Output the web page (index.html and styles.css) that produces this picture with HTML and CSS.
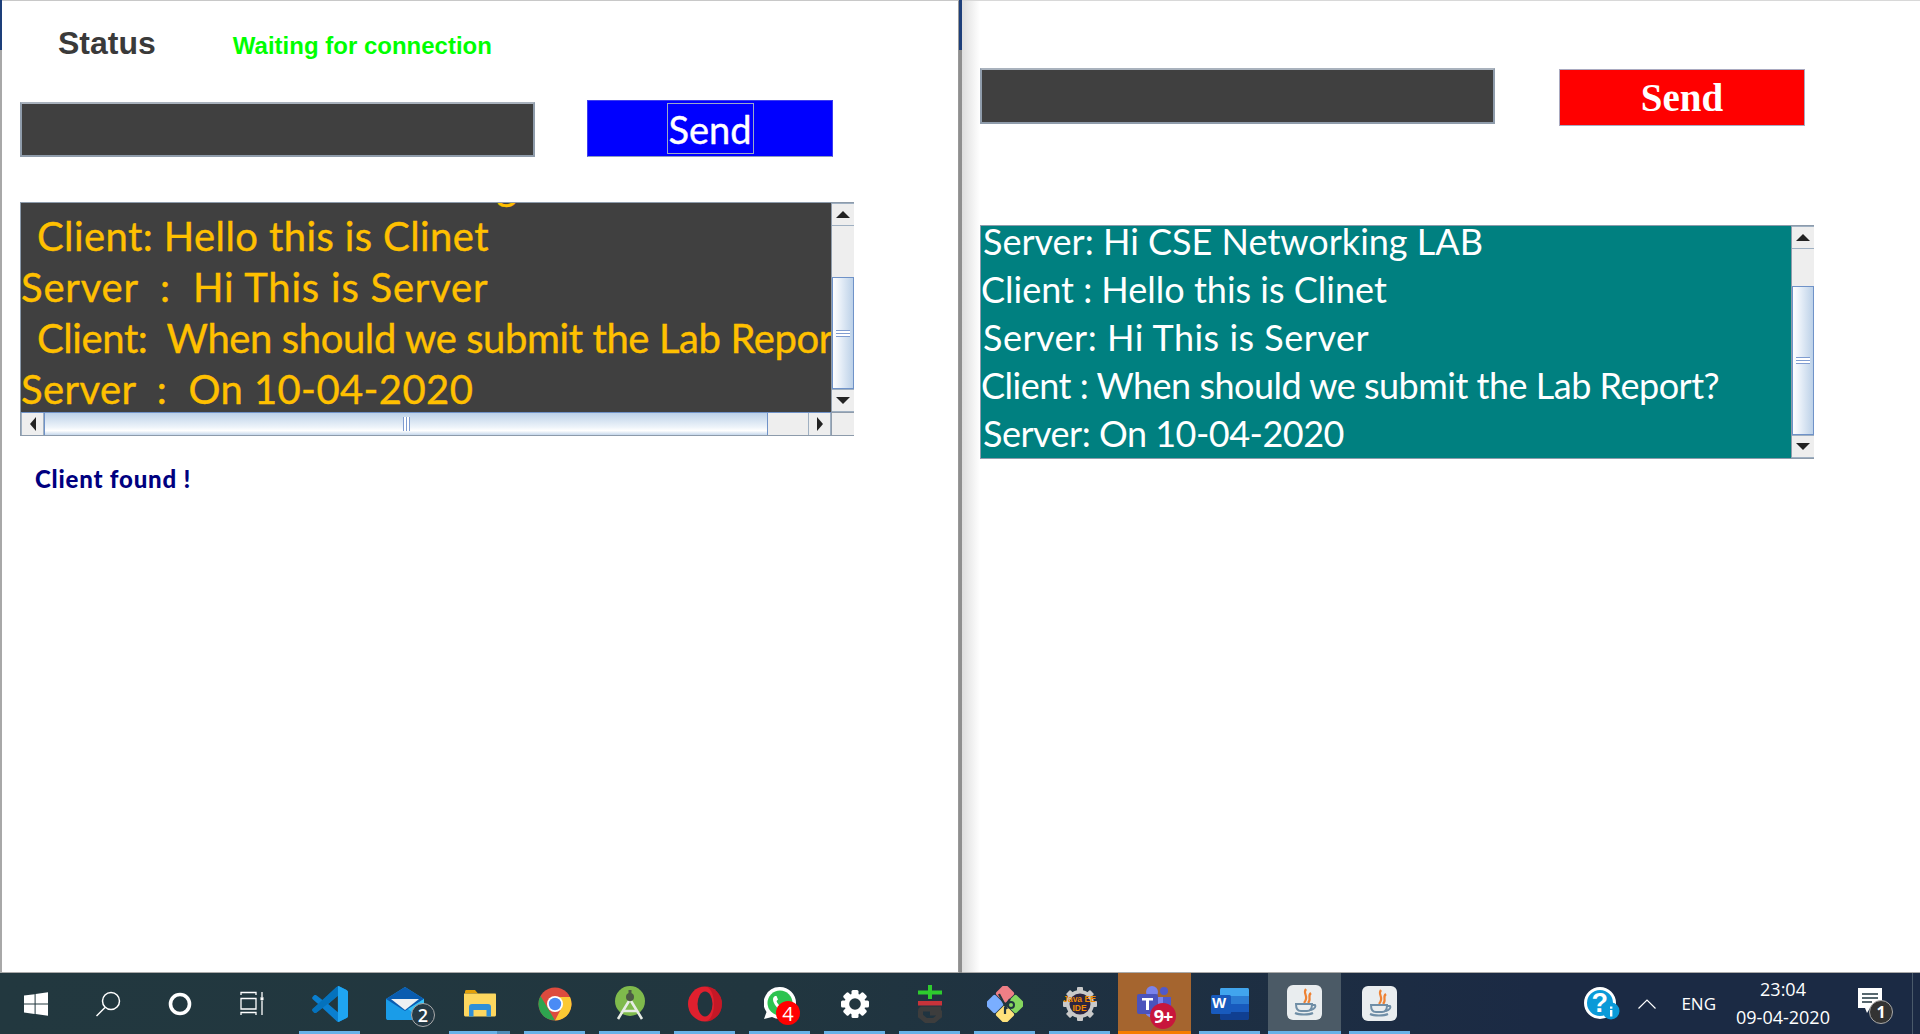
FILE: index.html
```html
<!DOCTYPE html>
<html lang="en">
<head>
  <meta charset="UTF-8">
  <title>Chat Lab</title>
  <link rel="stylesheet" href="styles.css">
</head>
<body>
  <div class="desktop">
    <div class="edge"></div>

    <!-- server window -->
    <div class="window window-left">
      <div class="status-row">
        <span class="status-title">Status</span>
        <span class="status-text">Waiting for connection</span>
      </div>
      <div class="form-row">
        <div class="field"></div>
        <button class="send send-blue"><span class="send-focus">Send</span></button>
      </div>
      <div class="panel panel-dark">
        <div class="log log-yellow">
          <div class="log-line">Server : Hi CSE Networking LAB</div>
          <div class="log-line indent snug">Client: Hello this is Clinet</div>
          <div class="log-line wide">Server  :  Hi This is Server</div>
          <div class="log-line indent tight">Client:  When should we submit the Lab Report?</div>
          <div class="log-line snug">Server  :  On 10-04-2020</div>
        </div>
        <div class="vbar vbar-left">
          <div class="sb-btn"><i class="arrow arrow-up"></i></div>
          <div class="sb-track"></div>
          <div class="sb-thumb"><i class="grip"></i></div>
          <div class="sb-btn"><i class="arrow arrow-down"></i></div>
        </div>
        <div class="hbar">
          <div class="sb-btn"><i class="arrow arrow-left"></i></div>
          <div class="sb-thumb-h"><i class="grip-h"></i></div>
          <div class="sb-track"></div>
          <div class="sb-btn"><i class="arrow arrow-right"></i></div>
        </div>
        <div class="corner"></div>
      </div>
      <div class="found">Client found !</div>
    </div>

    <div class="divider"></div>

    <!-- client window -->
    <div class="window window-right">
      <div class="form-row form-row-right">
        <div class="field"></div>
        <button class="send send-red">Send</button>
      </div>
      <div class="panel panel-teal">
        <div class="log log-white">
          <div class="log-line indent">Server: Hi CSE Networking LAB</div>
          <div class="log-line">Client : Hello this is Clinet</div>
          <div class="log-line indent wide">Server: Hi This is Server</div>
          <div class="log-line tight">Client : When should we submit the Lab Report?</div>
          <div class="log-line indent tight">Server: On 10-04-2020</div>
        </div>
        <div class="vbar vbar-right">
          <div class="sb-btn"><i class="arrow arrow-up"></i></div>
          <div class="sb-track"></div>
          <div class="sb-thumb"><i class="grip"></i></div>
          <div class="sb-btn"><i class="arrow arrow-down"></i></div>
        </div>
      </div>
    </div>
  </div>

  <div class="taskbar">
    <div class="tb-sys">
      <svg width="24" height="24" viewBox="0 0 24 24"><path fill="#fff" d="M0 3.600 10.600 2.200V11.400H0ZM11.600 2 24 .2V11.400H11.600ZM0 12.500H10.600V21.900L0 20.400ZM11.600 12.500H24V23.800L11.600 22Z"/></svg>
    </div>
    <div class="tb-sys">
      <svg width="26" height="26" viewBox="0 0 26 26" fill="none" stroke="#fff" stroke-width="1.500"><circle cx="16" cy="10" r="8.500"/><path d="M10 16.500 1.500 25"/></svg>
    </div>
    <div class="tb-sys">
      <svg width="26" height="26" viewBox="0 0 26 26" fill="none"><circle cx="13" cy="13" r="9.500" stroke="#fff" stroke-width="3.600"/></svg>
    </div>
    <div class="tb-sys">
      <svg width="26" height="26" viewBox="0 0 26 26" fill="none" stroke="#fff" stroke-width="1.300"><path d="M2 4V1.500H17V4M2 24V21.500H17V24M2 7.500H17V18H2ZM23 1V6M23 9.500V24"/><rect x="21.500" y="6.200" width="3" height="3" fill="#fff" stroke="none"/></svg>
    </div>

    <div class="tb-app tb-first open">
      <svg width="36" height="36" viewBox="0 0 100 100">
        <path fill="#0a7fd0" fill-rule="evenodd" d="M96 11 75 1C72 0 70 1 68 3L29 39 12 26C10 25 8 25 6 26L2 30C0 32 0 35 2 37L17 50 2 63C0 65 0 68 2 70L6 74C8 75 10 75 12 74L29 61 68 97C70 99 72 100 75 99L96 89C98 88 100 85 100 83V17C100 15 98 12 96 11ZM72 27 45 50 72 73Z"/>
        <path fill="#1fa5f2" d="M72 0 75 1 96 11C98 12 100 15 100 17V83C100 85 98 88 96 89L75 99 72 100Z"/>
        <path fill="#0067ad" d="M68 3 72 2V27L29 61 12 74C10 75 8 75 6 74L2 70C0 68 0 65 2 63Z" opacity=".55"/>
      </svg>
    </div>
    <div class="tb-app">
      <svg width="38" height="34" viewBox="0 0 38 34">
        <path fill="#1a9ce8" d="M0 12 19 0 38 12V31C38 32.500 37 33 36 33H2C1 33 0 32.500 0 31Z"/>
        <path fill="#0a5cb0" d="M0 12 19 0 38 12 19 24Z"/>
        <path fill="#eef0f2" d="M5 12H33L19 23Z"/>
        <path fill="#39c2f5" d="M38 12V31C38 32 37 33 36 33L22 22Z"/>
      </svg>
      <span class="tb-badge badge-count">2</span>
    </div>
    <div class="tb-app open open-split">
      <svg width="32" height="27" viewBox="0 0 32 27">
        <path fill="#e3a008" d="M1 1.500C1 .6 1.600 0 2.500 0H11L14 3.500H1Z"/>
        <path fill="#fdd75f" d="M0 3.500H31C31.600 3.500 32 4 32 4.500V25C32 26 31 26.500 30 26.500H2C1 26.500 0 26 0 25Z"/>
        <path fill="#2f8fd8" d="M5 26.500V17C5 15 6 14 8 14H24C26 14 27 15 27 17V26.500H22.500V20H9.500V26.500Z"/>
      </svg>
    </div>
    <div class="tb-app open">
      <svg width="34" height="34" viewBox="0 0 34 34">
        <circle cx="17" cy="17" r="16.500" fill="#dd4b3e"/>
        <path fill="#2ea44f" d="M2.500 9 10 21.500 17 33.500A16.500 16.500 0 0 1 2.500 9Z"/>
        <path fill="#fcc934" d="M17 10H32A16.500 16.500 0 0 1 17 33.500L23.500 21Z"/>
        <circle cx="17" cy="17" r="8" fill="#fff"/>
        <circle cx="17" cy="17" r="6.200" fill="#4a8bf5"/>
      </svg>
    </div>
    <div class="tb-app open">
      <svg width="32" height="36" viewBox="0 0 32 36">
        <circle cx="16" cy="15" r="15" fill="#7fba4c"/>
        <path fill="none" stroke="#e8ece6" stroke-width="2.600" d="M15 15 4 33M17 15 28 33M9 25H23"/>
        <circle cx="16" cy="11" r="4" fill="#4c5a45"/>
        <rect x="14.500" y="4" width="3" height="4" fill="#4c5a45"/>
      </svg>
    </div>
    <div class="tb-app open">
      <svg width="34" height="36" viewBox="0 0 34 36">
        <ellipse cx="17" cy="18" rx="17" ry="17.500" fill="#e0202e"/>
        <path fill="#a80f1e" d="M17 .5C26 .5 34 8 34 18S26 35.500 17 35.500C22 35.500 26 28 26 18S22 .5 17 .5Z" opacity=".5"/>
        <ellipse cx="17" cy="18" rx="7.500" ry="12.500" fill="#21363f"/>
      </svg>
    </div>
    <div class="tb-app open">
      <svg width="32" height="33" viewBox="0 0 32 33">
        <path fill="#fff" d="M16 0A16 16 0 0 1 16 32C13 32 10.500 31 8 30L0 32 2.500 25A16 16 0 0 1 16 0Z"/>
        <circle cx="16" cy="16" r="12.500" fill="#2cc350"/>
        <path fill="#fff" d="M11 9C9 10 8.500 12 9.500 15 11 19 14 22 18 23 20.500 23.500 22.500 22.500 23 20.500L20 18.500 18 20C15.500 19 13 16.500 12.500 14L14 12.500 12.500 9Z"/>
      </svg>
      <span class="tb-badge badge-red">4</span>
    </div>
    <div class="tb-app open">
      <svg width="28" height="28" viewBox="-14 -14 28 28">
        <g fill="#fff">
          <rect x="-3.500" y="-14" width="7" height="28" rx="1.500"/>
          <rect x="-3.500" y="-14" width="7" height="28" rx="1.500" transform="rotate(45)"/>
          <rect x="-3.500" y="-14" width="7" height="28" rx="1.500" transform="rotate(90)"/>
          <rect x="-3.500" y="-14" width="7" height="28" rx="1.500" transform="rotate(135)"/>
        </g>
        <circle r="10.500" fill="#fff"/>
        <circle r="5.800" fill="#21363f"/>
      </svg>
    </div>
    <div class="tb-app open">
      <svg width="24" height="38" viewBox="0 0 24 38">
        <path fill="#2ecc2e" d="M10 0H14V5.500H24V9.500H14V14H10V9.500H0V5.500H10Z"/>
        <rect y="16" width="24" height="4.500" fill="#c8333a"/>
        <path fill="none" stroke="#3d3d3d" stroke-width="5" d="M23 24H4.500C3 24 2.500 25 2.500 26V31L8 35.500H16L21.500 31V28H12"/>
      </svg>
    </div>
    <div class="tb-app open">
      <svg width="36" height="36" viewBox="-18 -18 36 36">
        <rect x="-17.500" y="-7" width="14" height="14" rx="2" transform="rotate(45 -10.500 0)" fill="#7aaeff"/>
        <rect x="3.500" y="-7" width="14" height="14" rx="2" transform="rotate(45 10.500 0)" fill="#86d65f"/>
        <rect x="-7" y="3.500" width="14" height="14" rx="2" transform="rotate(45 0 10.500)" fill="#ffe27c"/>
        <rect x="-7" y="-17.500" width="14" height="14" rx="2" transform="rotate(45 0 -10.500)" fill="#ef7f86"/>
        <path fill="none" stroke="#21363f" stroke-width="2.200" d="M-6-10 2 5M5-5 0 3M0 3V10"/>
        <circle cx="6" cy="1" r="3" fill="none" stroke="#21363f" stroke-width="2"/>
      </svg>
    </div>
    <div class="tb-app open">
      <svg width="34" height="34" viewBox="-17 -17 34 34">
        <g fill="#c9c9c9">
          <rect x="-3" y="-17" width="6" height="34" rx="1"/>
          <rect x="-3" y="-17" width="6" height="34" rx="1" transform="rotate(45)"/>
          <rect x="-3" y="-17" width="6" height="34" rx="1" transform="rotate(90)"/>
          <rect x="-3" y="-17" width="6" height="34" rx="1" transform="rotate(135)"/>
        </g>
        <circle r="14" fill="#c9c9c9"/>
        <circle r="10.500" fill="#2c2540"/>
      </svg>
      <span class="javaee">Java EE<br>IDE</span>
    </div>
    <div class="tb-app tb-app-teams">
      <svg width="36" height="32" viewBox="0 0 36 32">
        <circle cx="27" cy="5" r="4" fill="#5059c9"/>
        <circle cx="15" cy="6" r="6" fill="#7b83eb"/>
        <path fill="#5059c9" d="M22 11H34V22C34 26 30 28 27 28 24 28 22 27 22 25Z"/>
        <path fill="#7b83eb" d="M8 11H26V25C26 29 22 32 17 32 12 32 8 29 8 25Z"/>
        <rect y="8" width="21" height="20" rx="2" fill="#4b53bc"/>
        <path fill="#fff" d="M5 12H16V14.500H12V24H9V14.500H5Z"/>
      </svg>
      <span class="tb-badge badge-teams">9+</span>
    </div>
    <div class="tb-app open">
      <svg width="38" height="32" viewBox="0 0 38 32">
        <path fill="#41a5ee" d="M9 1.500C9 .6 9.600 0 10.500 0H36.500C37.400 0 38 .6 38 1.500V8H9Z"/>
        <rect x="9" y="8" width="29" height="8" fill="#2b7cd3"/>
        <rect x="9" y="16" width="29" height="8" fill="#185abd"/>
        <path fill="#103f91" d="M9 24H38V30.500C38 31.400 37.400 32 36.500 32H10.500C9.600 32 9 31.400 9 30.500Z"/>
        <rect y="7" width="20" height="19" rx="1.500" fill="#185abd"/>
      </svg>
      <span class="word-w">W</span>
    </div>
    <div class="tb-app tb-app-active">
      <svg width="35" height="35" viewBox="0 0 35 35">
        <rect width="35" height="35" rx="6" fill="#e9edef"/>
        <path fill="none" stroke="#ee8233" stroke-width="2.200" d="M19 4C15 9 23 11 17 18M24 8C20 11 25 14 21 18"/>
        <path fill="none" stroke="#6f8ea6" stroke-width="2" d="M9 19C9 24 11 26 14 26H20C23 26 25 24 25 19H9ZM25 20H28C29 21 28 24 24 25M8 28C12 30 22 30 26 28"/>
      </svg>
    </div>
    <div class="tb-app open">
      <svg width="35" height="35" viewBox="0 0 35 35">
        <rect width="35" height="35" rx="6" fill="#e9edef"/>
        <path fill="none" stroke="#ee8233" stroke-width="2.200" d="M19 4C15 9 23 11 17 18M24 8C20 11 25 14 21 18"/>
        <path fill="none" stroke="#6f8ea6" stroke-width="2" d="M9 19C9 24 11 26 14 26H20C23 26 25 24 25 19H9ZM25 20H28C29 21 28 24 24 25M8 28C12 30 22 30 26 28"/>
      </svg>
    </div>

    <div class="tray">
      <div class="tray-help">
        <svg width="36" height="33" viewBox="0 0 36 33">
          <circle cx="16" cy="16" r="14.500" fill="#0a9ad8" stroke="#fff" stroke-width="3"/>
          <circle cx="27" cy="24" r="8.500" fill="#0a9ad8"/>
          <rect x="26" y="23" width="2.400" height="6.500" fill="#fff"/>
          <rect x="26" y="19.500" width="2.400" height="2.200" fill="#fff"/>
        </svg>
        <span class="help-q">?</span>
      </div>
      <svg class="tray-chevron" width="18" height="10" viewBox="0 0 18 10" fill="none" stroke="#fff" stroke-width="1.200"><path d="M.5 9.500 9 1 17.500 9.500"/></svg>
      <span class="tray-lang">ENG</span>
      <div class="tray-clock">
        <div>23:04</div>
        <div>09-04-2020</div>
      </div>
      <div class="tray-note">
        <svg width="24" height="28" viewBox="0 0 24 28">
          <path fill="#fff" d="M0 0H24V20H12L9 25 7 20H0Z"/>
          <path stroke="#21363f" stroke-width="1.300" d="M4 6H20M4 10H20M4 14H14"/>
        </svg>
        <span class="tb-badge badge-note">1</span>
      </div>
      <div class="show-desktop"></div>
    </div>
  </div>
</body>
</html>
```

FILE: styles.css
```css
* { box-sizing: border-box; }

html, body {
  margin: 0;
  height: 100%;
  overflow: hidden;
}
body {
  display: flex;
  flex-direction: column;
  font-family: "Liberation Sans", sans-serif;
  background: #fff;
}

.desktop {
  display: flex;
  height: 973px;
}
.edge {
  width: 2px;
  background: linear-gradient(#1d3f7a 50px, #a8a8a8 50px);
}
.divider {
  width: 3px;
  background: linear-gradient(#1d3f7a 50px, #8f8f8f 50px);
}
.window {
  background: #fff;
}
.window-left {
  width: 957px;
  border-top: 1px solid #c8c8c8;
  border-bottom: 1px solid #aaa;
  border-right: 1px solid #999;
}
.window-right {
  flex: 1;
  border-top: 1px solid #d8d8d8;
  border-bottom: 1px solid #aaa;
  background: linear-gradient(90deg, #dedede, #fff 18px);
}

.status-row {
  display: flex;
  align-items: baseline;
  padding: 24px 0 0 56px;
}
.status-title {
  font-size: 32px;
  font-weight: bold;
  color: #3a3a3a;
}
.status-text {
  margin-left: 77px;
  font-size: 24px;
  font-weight: bold;
  color: #00ff00;
}

.form-row {
  display: flex;
  align-items: flex-end;
  margin-top: 38px;
  padding-left: 18px;
}
.form-row-right {
  align-items: flex-start;
  margin-top: 0;
  padding-top: 67px;
}
.field {
  width: 515px;
  height: 55px;
  background: #404040;
  border: 2px solid #8f9cab;
  border-top-color: #a9b2bd;
}
.form-row-right .field {
  height: 56px;
}
.send {
  width: 246px;
  height: 57px;
  margin-left: 52px;
  padding: 0;
  color: #fff;
  cursor: pointer;
}
.send-blue {
  display: flex;
  justify-content: center;
  align-items: stretch;
  padding: 2px 0;
  background: #0000ff;
  border: 1px solid #3d3df0;
  border-bottom-color: #8c9cc0;
}
.send-focus {
  display: flex;
  align-items: center;
  justify-content: center;
  width: 87px;
  font-family: "Lato", sans-serif;
  font-size: 38px;
  -webkit-text-stroke: .4px #fff;
  border: 1px solid #9aa9c6;
}
.send-red {
  margin: 1px 0 0 64px;
  background: #ff0000;
  border: 1px solid #a9a9c0;
  font-family: "Liberation Serif", serif;
  font-size: 39px;
  font-weight: bold;
  line-height: 48px;
}

.panel {
  display: grid;
  width: 834px;
  height: 234px;
  margin-left: 18px;
  border: 1px solid #8d9bab;
  grid-template-columns: 810px 23px;
}
.panel-dark {
  margin-top: 45px;
  grid-template-rows: 209px 23px;
  background: #404040;
}
.panel-teal {
  margin-top: 99px;
  background: #008080;
}

.log {
  overflow: hidden;
  font-family: "Lato", sans-serif;
}
.log-line {
  white-space: pre;
}
.log-yellow {
  color: #ffc000;
  font-size: 40px;
  line-height: 51px;
  letter-spacing: .6px;
  -webkit-text-stroke: .4px #ffc000;
}
.log-yellow .log-line:first-child {
  margin-top: -43px;
}
.log-yellow .indent {
  padding-left: 16px;
}
.log-yellow .snug { letter-spacing: .4px; }
.log-yellow .wide { letter-spacing: .8px; }
.log-yellow .tight { letter-spacing: -.4px; }
.log-white {
  color: #fff;
  font-size: 36px;
  line-height: 48px;
}
.log-white .log-line:first-child {
  margin-top: -9px;
}
.log-white .indent {
  padding-left: 2px;
}
.log-white .wide { letter-spacing: .5px; }
.log-white .tight { letter-spacing: -.5px; }

.vbar, .hbar {
  display: flex;
  background: #eee;
}
.vbar {
  flex-direction: column;
  border-left: 1px solid #8f9cab;
}
.hbar {
  border-top: 1px solid #6f92c8;
}
.corner {
  background: #eee;
  border-top: 1px solid #8f9cab;
  border-left: 1px solid #8f9cab;
}
.sb-btn {
  display: flex;
  flex: 0 0 23px;
  align-items: center;
  justify-content: center;
  background: #eee;
  border: 1px solid #c6ced6;
}
.vbar .sb-btn {
  border-width: 1px 0;
  border-color: #9fb0c2;
}
.hbar .sb-btn {
  border-width: 0 1px;
  border-color: #9fb0c2;
}
.sb-track {
  flex: 1;
  background: #eee;
}
.vbar-left .sb-track { flex: 0 0 51px; }
.vbar-right .sb-track { flex: 0 0 37px; }
.sb-thumb {
  display: flex;
  flex: 1;
  align-items: center;
  justify-content: center;
  border: 1px solid #6f92c8;
  background: linear-gradient(90deg, #ffffff, #f0f5fb 25%, #bcd1e8);
}
.sb-thumb-h {
  display: flex;
  flex: 0 0 724px;
  align-items: center;
  justify-content: center;
  border-left: 1px solid #6f92c8;
  border-right: 1px solid #6f92c8;
  background: linear-gradient(#bcd1e8, #eef4fa 65%, #fff 80%, #c6d8ec);
}
.grip {
  width: 14px;
  height: 7px;
  background: repeating-linear-gradient(#7f9cd0 0 1px, #fff 1px 3px);
}
.grip-h {
  width: 7px;
  height: 14px;
  background: repeating-linear-gradient(90deg, #7f9cd0 0 1px, #fff 1px 3px);
}
.arrow {
  width: 0;
  height: 0;
  border: 5px solid transparent;
}
.arrow-up { border-top: 0; border-bottom: 7px solid #222; border-left-width: 7px; border-right-width: 7px; }
.arrow-down { border-bottom: 0; border-top: 7px solid #222; border-left-width: 7px; border-right-width: 7px; }
.arrow-left { border-left: 0; border-right: 6px solid #222; border-top-width: 7px; border-bottom-width: 7px; }
.arrow-right { border-right: 0; border-left: 6px solid #222; border-top-width: 7px; border-bottom-width: 7px; }

.found {
  margin: 28px 0 0 33px;
  font-family: "Lato", sans-serif;
  font-size: 24px;
  font-weight: 900;
  letter-spacing: .8px;
  color: #00007f;
}

/* taskbar */
.taskbar {
  display: flex;
  flex: 0 0 61px;
  background: linear-gradient(90deg, #22383f, #21363f 40%, #1b2a44 80%);
  color: #fff;
}
.tb-sys {
  display: flex;
  width: 72px;
  align-items: center;
  justify-content: center;
}
.tb-app {
  position: relative;
  display: flex;
  width: 75px;
  align-items: center;
  justify-content: center;
}
.tb-first {
  margin-left: 4px;
}
.tb-app.open::after {
  content: "";
  position: absolute;
  left: 7px;
  right: 7px;
  bottom: 0;
  height: 3px;
  background: #68b2e8;
}
.open-split::before {
  content: "";
  position: absolute;
  right: 7px;
  bottom: 0;
  z-index: 1;
  width: 13px;
  height: 3px;
  background: #4f8cb8;
}
.tb-app-teams {
  width: 73px;
  margin: 0 1px;
  background: #a5652f;
  border-bottom: 3px solid #f57c00;
}
.tb-app-active {
  width: 73px;
  margin: 0 1px;
  background: #4b5a66;
  border-bottom: 3px solid #68b2e8;
}
.tb-badge {
  position: absolute;
  display: flex;
  align-items: center;
  justify-content: center;
  border-radius: 50%;
  font-family: "Open Sans", sans-serif;
  color: #fff;
}
.badge-count {
  left: 44px;
  top: 30px;
  width: 24px;
  height: 24px;
  background: #263a45;
  border: 1px solid #aaa;
  font-size: 18px;
  font-weight: 600;
}
.badge-red {
  left: 34px;
  top: 28px;
  width: 24px;
  height: 24px;
  background: #ff0000;
  font-size: 20px;
}
.badge-teams {
  left: 32px;
  top: 30px;
  width: 26px;
  height: 26px;
  background: #c8163c;
  font-size: 18px;
  font-weight: 700;
  letter-spacing: -1px;
}
.badge-note {
  left: 11px;
  top: 12px;
  width: 24px;
  height: 24px;
  background: #333;
  border: 1px solid #aaa;
  font-size: 16px;
  font-weight: 700;
}
.javaee {
  position: absolute;
  width: 100%;
  padding-top: 1px;
  text-align: center;
  font-family: "Liberation Sans", sans-serif;
  font-size: 8.500px;
  font-weight: bold;
  line-height: 9px;
  color: #f08a00;
}
.word-w {
  position: absolute;
  left: 20px;
  top: 21px;
  font-family: "Liberation Sans", sans-serif;
  font-size: 15px;
  font-weight: bold;
}

.tray {
  display: flex;
  flex: 1;
  align-items: center;
  justify-content: flex-end;
}
.tray-help {
  position: relative;
  display: flex;
  margin-right: 18px;
}
.help-q {
  position: absolute;
  left: 7px;
  top: 1px;
  font-size: 27px;
  font-weight: bold;
}
.tray-chevron {
  margin-right: 25px;
}
.tray-lang {
  margin-right: 17px;
  font-family: "Open Sans", sans-serif;
  font-size: 17px;
}
.tray-clock {
  width: 100px;
  margin-right: 25px;
  margin-bottom: 2px;
  font-family: "Open Sans", sans-serif;
  font-size: 18px;
  line-height: 28px;
  text-align: center;
}
.tray-note {
  position: relative;
  width: 36px;
  height: 38px;
  margin-right: 18px;
  margin-top: 6px;
}
.show-desktop {
  align-self: stretch;
  width: 8px;
  border-left: 1px solid #4a5a6a;
}
```
